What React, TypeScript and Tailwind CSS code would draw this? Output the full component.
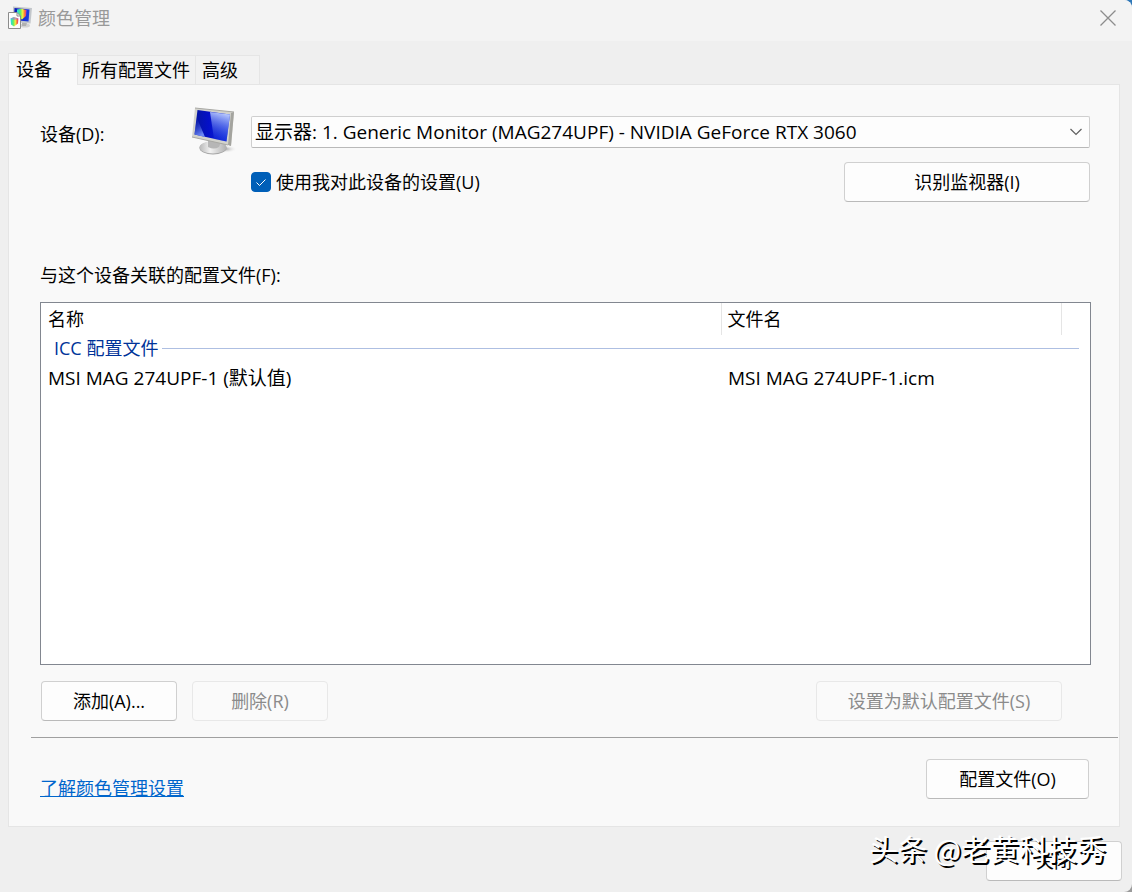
import { useState } from 'react';

const tabs = ['设备', '所有配置文件', '高级'];

const profiles = [{ name: 'MSI MAG 274UPF-1 (默认值)', file: 'MSI MAG 274UPF-1.icm' }];

const buttonBase = 'h-10 rounded-[4px] border text-center';
const buttonOn = 'border-[#d0d0d0] border-b-[#bababa] bg-[#fdfdfd] text-black';
const buttonOff = 'border-[#e8e8e8] bg-[#fafafa] text-[#8b8b8b]';

// Small monitor with a gamut solid, and a profile page in front of it
function AppIcon() {
  return (
    <svg className="size-6" viewBox="0 0 24 24" aria-hidden="true">
      <defs>
        <linearGradient id="app-screen" x1="0" x2="1">
          <stop offset="0" stopColor="#0a18b4" />
          <stop offset="1" stopColor="#1c3fe4" />
        </linearGradient>
        <linearGradient id="gamut" x1="0" x2="1">
          <stop offset="0" stopColor="#22d8f0" />
          <stop offset="0.350" stopColor="#5cf06a" />
          <stop offset="0.600" stopColor="#f8ec40" />
          <stop offset="0.850" stopColor="#f4603c" />
          <stop offset="1" stopColor="#e040c0" />
        </linearGradient>
      </defs>
      <ellipse cx="17" cy="19.500" rx="5" ry="2" fill="#d2d2d2" />
      <path d="M14 16 L19 17 L18 20 L14 20 Z" fill="#b0b0b0" />
      <path d="M5 0.500 L24 2 L22.500 17.500 L5 16 Z" fill="#c2c6ca" />
      <path d="M6.500 2 L21.500 3.500 L20.500 15.500 L6 14 Z" fill="url(#app-screen)" />
      <path d="M9 3.500 L13.500 2.800 L18.500 4 L18 10 L14 13.500 L9 11 Z" fill="url(#gamut)" />
      <path d="M0.500 6.500 H9 L12.500 10 V22.500 H0.500 Z" fill="#fdfdfd" stroke="#8c8c8c" />
      <path d="M9 6.500 V10 H12.500" fill="none" stroke="#8c8c8c" />
      <path d="M2.500 12.500 L6 11 L10.500 12.500 L10 17.500 L6 20.500 L3 18.500 Z" fill="url(#gamut)" />
      <path d="M2.500 12.500 L6 11 L10.500 12.500 L6.500 14 Z" fill="#9c6cf0" opacity="0.600" />
    </svg>
  );
}

function MonitorIcon() {
  return (
    <svg className="size-12 shrink-0" viewBox="0 0 48 48" aria-hidden="true">
      <defs>
        <linearGradient id="screen" x1="0" y1="0" x2="1" y2="0">
          <stop offset="0" stopColor="#0616a0" />
          <stop offset="0.400" stopColor="#0410c8" />
          <stop offset="1" stopColor="#1430e0" />
        </linearGradient>
        <linearGradient id="glare" x1="0.600" y1="0" x2="0.400" y2="1">
          <stop offset="0" stopColor="#c0d0ff" />
          <stop offset="1" stopColor="#1a3ae0" stopOpacity="0.200" />
        </linearGradient>
        <linearGradient id="corner-glare" x1="0" y1="0" x2="0.300" y2="1">
          <stop offset="0" stopColor="#1428b8" stopOpacity="0" />
          <stop offset="1" stopColor="#6c88f4" />
        </linearGradient>
        <linearGradient id="stand" x1="0" x2="1">
          <stop offset="0" stopColor="#b8b8b8" />
          <stop offset="0.400" stopColor="#f2f2f2" />
          <stop offset="1" stopColor="#b0b0b0" />
        </linearGradient>
        <radialGradient id="stand-shadow">
          <stop offset="0" stopColor="#9a9a9a" />
          <stop offset="1" stopColor="#f9f9f9" stopOpacity="0" />
        </radialGradient>
      </defs>
      <ellipse cx="34" cy="42" rx="12" ry="4" fill="url(#stand-shadow)" />
      <ellipse cx="22" cy="41" rx="13.500" ry="6.500" fill="#a4a4a4" />
      <ellipse cx="22" cy="40.300" rx="13.500" ry="6.200" fill="url(#stand)" />
      <path d="M17 33 L30 35 L28 40 Q23 43 17 40 Z" fill="#b6b6b6" />
      <path d="M4 1 L43 5 L40 39 L37 38 L1 30 Z" fill="#d2d2cc" />
      <path d="M43 5 L40 39 L37 38 L40 6 Z" fill="#a4a49f" />
      <path d="M4 1 L43 5" stroke="#a8a8a4" />
      <path d="M1 30 L37 38" stroke="#a8a8a4" />
      <path d="M6.500 3 L39 7.500 L35.500 34.500 L3.500 27.500 Z" fill="url(#screen)" />
      <path d="M19 5 L39 7.500 L35.500 34.500 L23 32 Z" fill="url(#glare)" />
      <path d="M5.500 10 L14 30 L3.500 27.500 Z" fill="url(#corner-glare)" />
    </svg>
  );
}

export default function App() {
  const [activeTab, setActiveTab] = useState(0);
  const [useMySettings, setUseMySettings] = useState(true);

  return (
    // The desktop shows through behind the rounded window corners
    <div className="bg-linear-to-b from-[#2f78b8] to-[#9a9a9a]">
      <div className="relative flex min-h-screen flex-col rounded-r-[8px] bg-[#efefef] font-['Open_Sans','Noto_Sans_CJK_SC',sans-serif] text-[18px] leading-6 text-black">
        {/* Title bar */}
        <header className="flex h-[41px] items-center justify-between rounded-tr-[8px] bg-[#f3f3f3] pr-4 pb-[6px] pl-2">
          <h1 className="flex items-center gap-[6px] text-[#999999]">
            <AppIcon />
            颜色管理
          </h1>
          <button type="button" aria-label="关闭窗口" className="text-[#8c8c8c]">
            <svg className="size-4" viewBox="0 0 16 16" fill="none" stroke="currentColor" strokeWidth="1.300">
              <path d="M0.500 0.500 L15.500 15.500 M15.500 0.500 L0.500 15.500" />
            </svg>
          </button>
        </header>

        <main className="flex grow flex-col px-2 pt-3 pr-3">
          <div role="tablist" className="flex items-end">
            {tabs.map((tab, index) => (
              <button
                key={tab}
                type="button"
                role="tab"
                aria-selected={activeTab === index}
                onClick={() => setActiveTab(index)}
                className={
                  activeTab === index
                    ? 'z-10 -mb-px h-8 w-[70px] shrink-0 border border-b-0 border-[#e5e5e5] bg-[#f9f9f9] pb-[2px] pl-[7px] text-left'
                    : 'h-[29px] shrink-0 border border-l-0 border-b-0 border-[#e5e5e5] bg-[#f2f2f2] pr-[5px] pl-1 text-left last:w-16 last:pl-[6px]'
                }
              >
                {tab}
              </button>
            ))}
          </div>

          <section className="flex grow flex-col border border-[#e5e5e5] bg-[#f9f9f9] pb-[26px]">
            <div className="grid grid-cols-[151px_60px_1fr] pt-[22px] pr-[29px] pl-[31px]">
              <label htmlFor="device" className="pt-[15px]">设备(D):</label>
              <MonitorIcon />
              <div className="pt-[9px]">
                <div className="relative">
                  <select
                    id="device"
                    className="h-8 w-full appearance-none rounded-[2px] border border-[#cfcfcf] border-b-[#b9b9b9] bg-[#fdfdfd] pr-8 pl-[3px] text-[19px]"
                  >
                    <option>显示器: 1. Generic Monitor (MAG274UPF) - NVIDIA GeForce RTX 3060</option>
                  </select>
                  <svg className="pointer-events-none absolute top-3 right-2 h-2 w-3" viewBox="0 0 12 8" fill="none" stroke="#5f5f5f" strokeWidth="1.200">
                    <path d="M0.500 1 L6 6.500 L11.500 1" />
                  </svg>
                </div>
                <div className="flex items-start justify-between pt-[14px]">
                  <label className="flex items-center gap-[5px] pt-2">
                    <span className="relative flex size-5">
                      <input
                        type="checkbox"
                        checked={useMySettings}
                        onChange={(e) => setUseMySettings(e.target.checked)}
                        className="peer size-5 appearance-none rounded-[4px] border border-[#8a8a8a] bg-white checked:border-[#005fb8] checked:bg-[#005fb8]"
                      />
                      <svg className="pointer-events-none absolute inset-0 hidden size-5 peer-checked:block" viewBox="0 0 20 20" fill="none" stroke="#ffffff">
                        <path d="M5.500 10.500 L8.500 13.500 L14.500 7.500" />
                      </svg>
                    </span>
                    使用我对此设备的设置(U)
                  </label>
                  <button type="button" className={`${buttonBase} ${buttonOn} w-[246px]`}>识别监视器(I)</button>
                </div>
              </div>
            </div>

            <div className="flex grow flex-col pt-[61px] pr-7 pl-[31px]">
              <h2 id="profiles-title">与这个设备关联的配置文件(F):</h2>
              <div className="mt-[15px] grow border border-[#828790] bg-white">
                <table aria-labelledby="profiles-title" className="w-full table-fixed">
                  <colgroup>
                    <col />
                    <col className="w-[340px]" />
                    <col className="w-[29px]" />
                  </colgroup>
                  <thead>
                    <tr className="h-8 text-left">
                      <th className="pl-[7px] font-normal">名称</th>
                      <th className="border-x border-[#e5e5e5] pl-[6px] font-normal">文件名</th>
                      <th />
                    </tr>
                  </thead>
                  <tbody>
                    <tr className="h-[26px]">
                      <th colSpan={3} className="pr-[11px] pl-[13px] font-normal text-[#003399]">
                        <span className="flex items-center gap-1">
                          ICC 配置文件
                          <span className="h-px grow bg-[#aebfe2]" />
                        </span>
                      </th>
                    </tr>
                    {profiles.map((profile) => (
                      <tr key={profile.file} className="h-[34px] text-[19px]">
                        <td className="pl-[7px]">{profile.name}</td>
                        <td className="pl-[7px]">{profile.file}</td>
                        <td />
                      </tr>
                    ))}
                  </tbody>
                </table>
              </div>
              <div className="mt-4 flex gap-[15px] pr-[29px] pl-px">
                <button type="button" className={`${buttonBase} ${buttonOn} w-[136px]`}>添加(A)...</button>
                <button type="button" disabled className={`${buttonBase} ${buttonOff} w-[136px]`}>删除(R)</button>
                <button type="button" disabled className={`${buttonBase} ${buttonOff} ml-auto w-[246px]`}>
                  设置为默认配置文件(S)
                </button>
              </div>
            </div>

            <hr className="mt-4 mr-px ml-[22px] border-[#a0a0a0]" />

            <div className="flex items-start justify-between pt-[21px] pr-[30px] pl-[31px]">
              <a href="#learn" className="mt-[17px] text-[#0066cc] underline">了解颜色管理设置</a>
              <button type="button" className={`${buttonBase} ${buttonOn} w-[163px]`}>配置文件(O)</button>
            </div>
          </section>
        </main>

        <footer className="flex justify-end px-[10px] pt-[14px] pb-[11px]">
          <button type="button" className={`${buttonBase} ${buttonOn} w-[136px]`}>关闭</button>
        </footer>

        <p className="pointer-events-none absolute right-[26px] bottom-6 font-['Noto_Sans_CJK_SC',sans-serif] text-[29px] leading-10 text-white [text-shadow:2px_2px_0_#000]">
          头条 @老黄科技秀
        </p>
      </div>
    </div>
  );
}
